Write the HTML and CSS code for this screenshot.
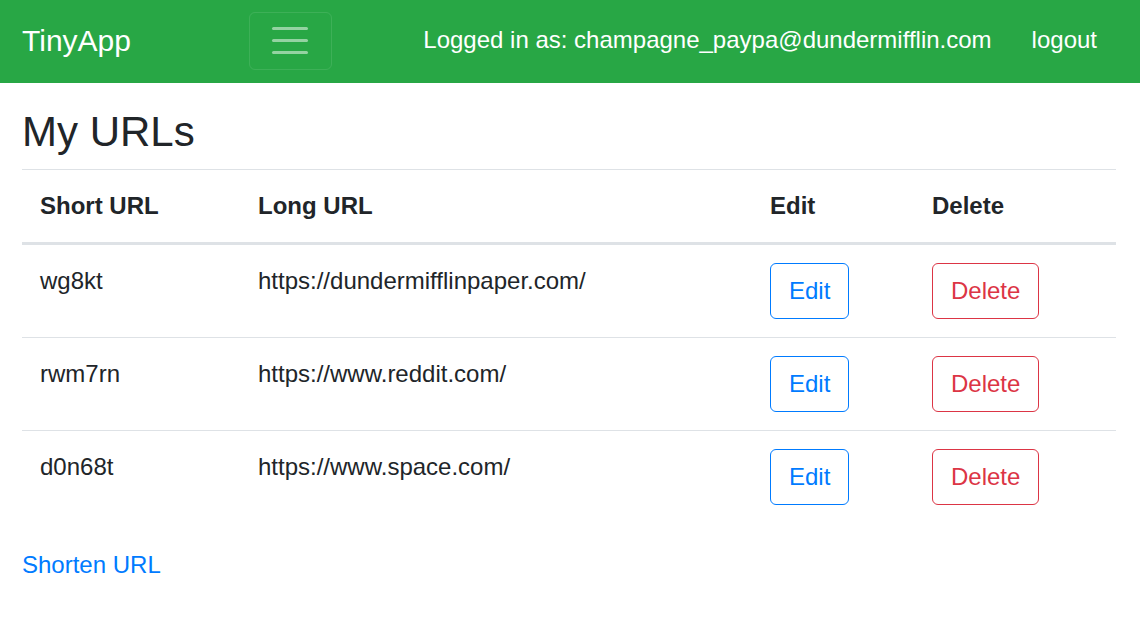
FILE: index.html
```html
<!DOCTYPE html>
<html lang="en">
<head>
<meta charset="utf-8">
<title>TinyApp</title>
<link rel="stylesheet" href="styles.css">
</head>
<body>
<nav class="navbar">
  <a class="brand" href="#">TinyApp</a>
  <button class="toggler" type="button" aria-label="Toggle navigation">
    <span class="bar"></span><span class="bar"></span><span class="bar"></span>
  </button>
  <div class="nav-links">
    <span class="nav-link">Logged in as: champagne_paypa@dundermifflin.com</span>
    <a class="nav-link" href="#">logout</a>
  </div>
</nav>
<main class="container">
  <h2 class="title">My URLs</h2>
  <table class="table">
    <thead>
      <tr>
        <th class="col-short">Short URL</th>
        <th class="col-long">Long URL</th>
        <th class="col-edit">Edit</th>
        <th class="col-delete">Delete</th>
      </tr>
    </thead>
    <tbody>
      <tr>
        <td>wg8kt</td>
        <td>https://dundermifflinpaper.com/</td>
        <td><button class="btn btn-edit">Edit</button></td>
        <td><button class="btn btn-delete">Delete</button></td>
      </tr>
      <tr>
        <td>rwm7rn</td>
        <td>https://www.reddit.com/</td>
        <td><button class="btn btn-edit">Edit</button></td>
        <td><button class="btn btn-delete">Delete</button></td>
      </tr>
      <tr>
        <td>d0n68t</td>
        <td>https://www.space.com/</td>
        <td><button class="btn btn-edit">Edit</button></td>
        <td><button class="btn btn-delete">Delete</button></td>
      </tr>
    </tbody>
  </table>
  <a class="link" href="#">Shorten URL</a>
</main>
</body>
</html>
```

FILE: styles.css
```css
* { box-sizing: border-box; }
html, body { margin: 0; padding: 0; }
body {
  font-family: "Liberation Sans", Arial, sans-serif;
  font-size: 24px;
  line-height: 36px;
  color: #212529;
  background: #fff;
}
a { text-decoration: none; }

.navbar {
  display: flex;
  align-items: center;
  height: 83px;
  background: #28a745;
  padding: 0 23px 2px 22px;
}
.brand {
  color: #fff;
  font-size: 30px;
  line-height: 45px;
}
.toggler {
  margin-left: 118px;
  width: 83px;
  height: 58px;
  border: 1px solid rgba(255,255,255,0.1);
  border-radius: 6px;
  background: transparent;
  display: flex;
  flex-direction: column;
  align-items: center;
  justify-content: center;
  gap: 9px;
  padding: 0;
}
.bar {
  display: block;
  width: 36px;
  height: 3px;
  border-radius: 2px;
  background: rgba(255,255,255,0.5);
}
.nav-links {
  margin-left: auto;
  margin-bottom: 2px;
  display: flex;
  align-items: center;
}
.nav-link {
  color: #fff;
  font-size: 24px;
  line-height: 36px;
  padding: 0 20px;
}

.container {
  padding: 24px 24px 0 22px;
}
.title {
  margin: 0 0 12px 0;
  font-size: 42px;
  line-height: 50px;
  font-weight: 500;
}
.table {
  width: 1094px;
  table-layout: fixed;
  border-collapse: collapse;
  margin-bottom: 24px;
}
.table th, .table td {
  text-align: left;
  vertical-align: top;
  padding: 18px;
  border-top: 1px solid #dee2e6;
}
.table th {
  font-weight: bold;
  border-bottom: 3px solid #dee2e6;
}
.col-short { width: 218px; }
.col-long { width: 512px; }
.col-edit { width: 162px; }
.col-delete { width: 202px; }

.btn {
  font-family: inherit;
  font-size: 24px;
  line-height: 36px;
  padding: 9px 18px;
  background: #fff;
  border: 1px solid;
  border-radius: 6px;
  cursor: pointer;
}
.btn-edit { color: #007bff; border-color: #007bff; }
.btn-delete { color: #dc3545; border-color: #dc3545; }

.link {
  color: #007bff;
}
```
